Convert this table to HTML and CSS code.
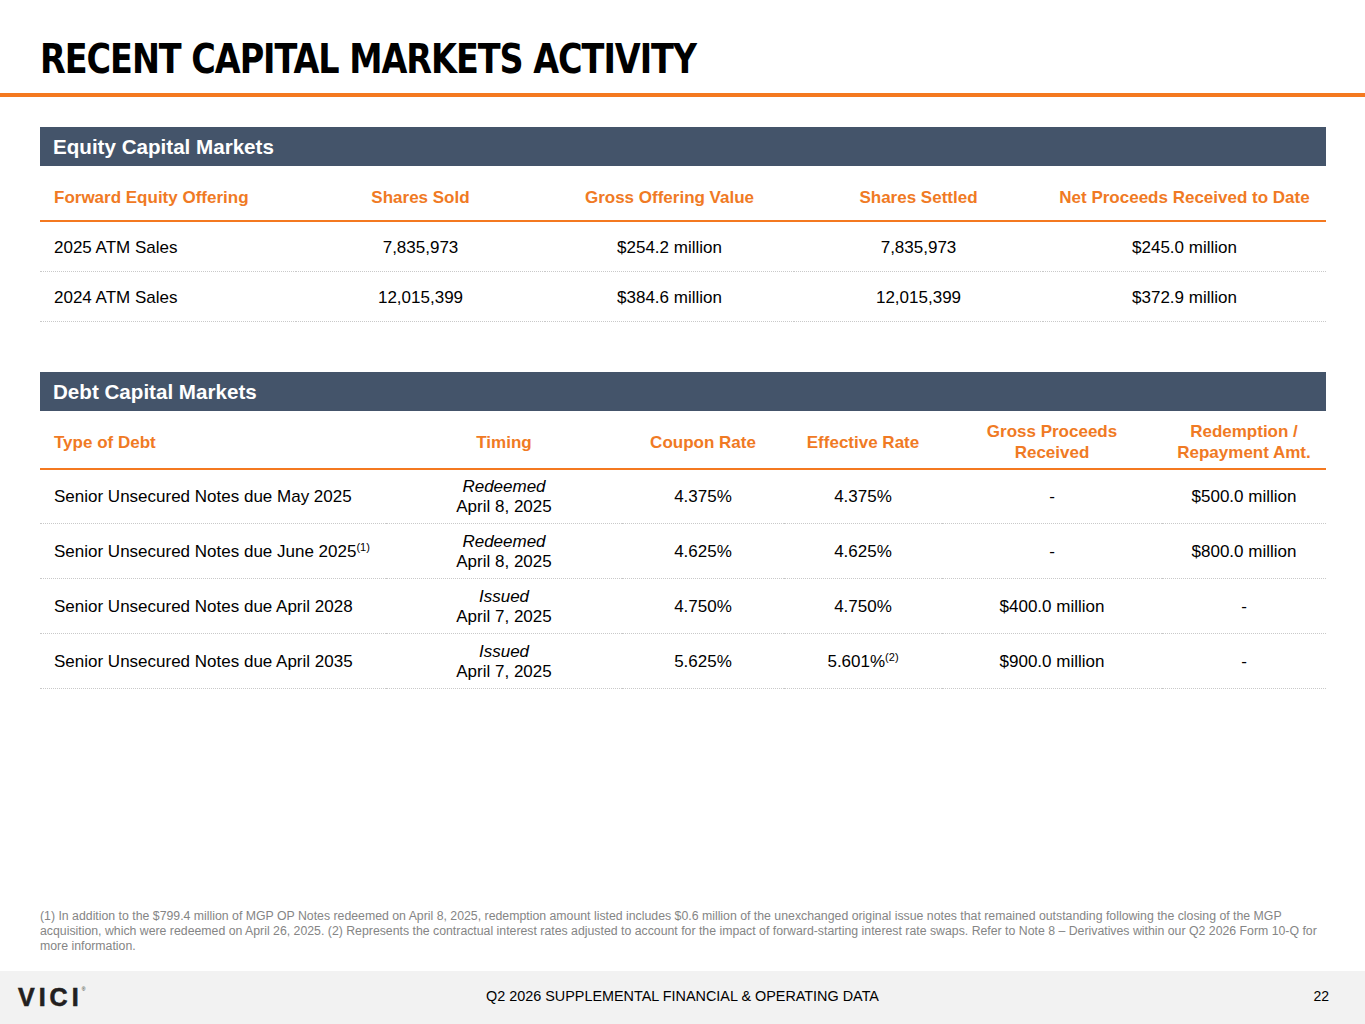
FILE: index.html
```html
<!DOCTYPE html>
<html lang="en">
<head>
<meta charset="utf-8">
<title>Recent Capital Markets Activity</title>
<link rel="stylesheet" href="styles.css">
</head>
<body>
<div class="page">
  <header class="page-head">
    <h1 class="title">RECENT CAPITAL MARKETS ACTIVITY</h1>
  </header>
  <div class="rule"></div>

  <section class="block equity">
    <div class="bar">Equity Capital Markets</div>
    <table class="grid">
      <colgroup>
        <col style="width:256px"><col style="width:249px"><col style="width:249px"><col style="width:249px"><col>
      </colgroup>
      <thead>
        <tr>
          <th class="left">Forward Equity Offering</th>
          <th>Shares Sold</th>
          <th>Gross Offering Value</th>
          <th>Shares Settled</th>
          <th>Net Proceeds Received to Date</th>
        </tr>
      </thead>
      <tbody>
        <tr>
          <td class="left">2025 ATM Sales</td>
          <td>7,835,973</td>
          <td>$254.2 million</td>
          <td>7,835,973</td>
          <td>$245.0 million</td>
        </tr>
        <tr>
          <td class="left">2024 ATM Sales</td>
          <td>12,015,399</td>
          <td>$384.6 million</td>
          <td>12,015,399</td>
          <td>$372.9 million</td>
        </tr>
      </tbody>
    </table>
  </section>

  <section class="block debt">
    <div class="bar">Debt Capital Markets</div>
    <table class="grid">
      <colgroup>
        <col style="width:346px"><col style="width:236px"><col style="width:162px"><col style="width:158px"><col style="width:220px"><col>
      </colgroup>
      <thead>
        <tr>
          <th class="left">Type of Debt</th>
          <th>Timing</th>
          <th>Coupon Rate</th>
          <th>Effective Rate</th>
          <th>Gross Proceeds<br>Received</th>
          <th>Redemption /<br>Repayment Amt.</th>
        </tr>
      </thead>
      <tbody>
        <tr>
          <td class="left">Senior Unsecured Notes due May 2025</td>
          <td><em>Redeemed</em><br>April 8, 2025</td>
          <td>4.375%</td>
          <td>4.375%</td>
          <td>-</td>
          <td>$500.0 million</td>
        </tr>
        <tr>
          <td class="left">Senior Unsecured Notes due June 2025<sup>(1)</sup></td>
          <td><em>Redeemed</em><br>April 8, 2025</td>
          <td>4.625%</td>
          <td>4.625%</td>
          <td>-</td>
          <td>$800.0 million</td>
        </tr>
        <tr>
          <td class="left">Senior Unsecured Notes due April 2028</td>
          <td><em>Issued</em><br>April 7, 2025</td>
          <td>4.750%</td>
          <td>4.750%</td>
          <td>$400.0 million</td>
          <td>-</td>
        </tr>
        <tr>
          <td class="left">Senior Unsecured Notes due April 2035</td>
          <td><em>Issued</em><br>April 7, 2025</td>
          <td>5.625%</td>
          <td>5.601%<sup>(2)</sup></td>
          <td>$900.0 million</td>
          <td>-</td>
        </tr>
      </tbody>
    </table>
  </section>

  <p class="footnote">(1) In addition to the $799.4 million of MGP OP Notes redeemed on April 8, 2025, redemption amount listed includes $0.6 million of the unexchanged original issue notes that remained outstanding following the closing of the MGP acquisition, which were redeemed on April 26, 2025. (2) Represents the contractual interest rates adjusted to account for the impact of forward-starting interest rate swaps. Refer to Note 8 – Derivatives within our Q2 2026 Form 10-Q for more information.</p>

  <footer class="footer">
    <div class="logo">VICI<span class="reg">®</span></div>
    <div class="footer-title">Q2 2026 SUPPLEMENTAL FINANCIAL &amp; OPERATING DATA</div>
    <div class="page-num">22</div>
  </footer>
</div>
</body>
</html>
```

FILE: styles.css
```css
* { box-sizing: border-box; }

html, body {
  margin: 0;
  padding: 0;
  background: #ffffff;
}

body {
  font-family: "Liberation Sans", Arial, sans-serif;
  color: #000000;
}

.page {
  width: 1365px;
  height: 1024px;
  display: flex;
  flex-direction: column;
}

.page-head {
  padding: 37px 40px 13px;
}

.title {
  margin: 0;
  font-family: "DejaVu Sans Condensed", "Liberation Sans", sans-serif;
  font-weight: 700;
  font-size: 43px;
  line-height: 43px;
  letter-spacing: -1.2px;
  color: #000000;
  transform: scale(0.865, 0.97);
  transform-origin: left center;
  white-space: nowrap;
}

.rule {
  height: 4px;
  background: #f47920;
}

.block {
  margin: 30px 39px 0 40px;
}

.block.debt {
  margin-top: 50px;
}

.bar {
  height: 39px;
  line-height: 40px;
  padding-left: 13px;
  background: #44546a;
  color: #ffffff;
  font-weight: 700;
  font-size: 20.6px;
}

.grid {
  width: 100%;
  border-collapse: collapse;
  table-layout: fixed;
  font-size: 17px;
}

.grid th {
  color: #f07a24;
  font-weight: 700;
  text-align: center;
  vertical-align: middle;
  border-bottom: 2px solid #f47920;
}

.grid td {
  text-align: center;
  vertical-align: middle;
  border-bottom: 1px dotted #c9c9c9;
}

.grid .left {
  text-align: left;
  padding-left: 14px;
}

.equity th {
  height: 55px;
  padding: 9px 0 0;
  line-height: 20px;
}

.equity td {
  height: 50px;
  line-height: 20px;
  padding: 3px 0 0;
}

.debt th {
  height: 58px;
  padding: 6px 0 0;
  line-height: 21px;
}

.debt td {
  height: 55px;
  line-height: 20px;
  padding: 2px 0 0;
}

.grid em {
  font-style: italic;
}

.grid sup {
  font-size: 11px;
  line-height: 0;
  vertical-align: 6px;
}

.footnote {
  margin: auto 40px 17px;
  font-size: 12.3px;
  line-height: 15px;
  color: #858585;
}

.footer {
  height: 53px;
  background: #f2f2f2;
  display: flex;
  align-items: center;
  justify-content: space-between;
  padding: 0 36px 3px 18px;
  position: relative;
}

.logo {
  font-family: "Liberation Sans", Arial, sans-serif;
  font-weight: 700;
  font-size: 25px;
  letter-spacing: 4px;
  color: #231f20;
  line-height: 1;
  padding-top: 3px;
  -webkit-text-stroke: 0.6px #231f20;
}

.logo .reg {
  font-size: 5px;
  vertical-align: 15px;
  letter-spacing: 0;
  font-weight: 400;
  margin-left: -1px;
  -webkit-text-stroke: 0;
}

.footer-title {
  position: absolute;
  left: 0;
  right: 0;
  text-align: center;
  font-size: 14.4px;
  color: #000000;
  pointer-events: none;
}

.page-num {
  font-size: 14px;
  color: #000000;
}
```
